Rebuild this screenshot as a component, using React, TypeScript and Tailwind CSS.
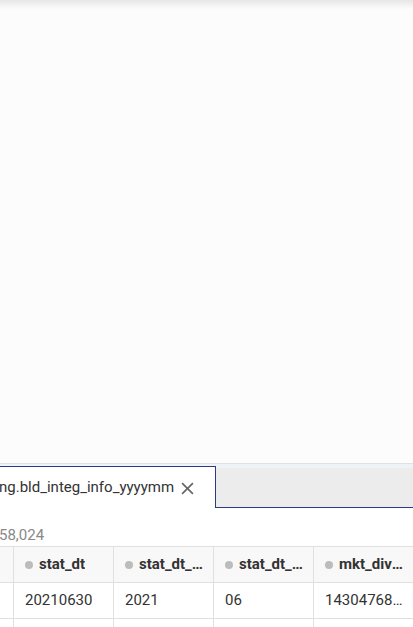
import React from "react";

const cols = [
  { h: "", d: "" },
  { h: "stat_dt", d: "20210630" },
  { h: "stat_dt_year", d: "2021" },
  { h: "stat_dt_month", d: "06" },
  { h: "mkt_div_code", d: "1430476800000" },
];

export default function App() {
  return (
    <div
      className="w-[413px] h-[627px] overflow-hidden bg-white flex flex-col"
      style={{ fontFamily: "Roboto, 'Liberation Sans', sans-serif" }}
    >
      <div className="h-[464px] shrink-0 bg-[#fcfcfc] border-b border-[#e2e2e2] relative">
        <div className="absolute top-0 left-0 right-0 h-[9px] bg-gradient-to-b from-[#e6e6e6] to-[#fcfcfc]" />
      </div>
      <div className="h-[44px] shrink-0 flex">
        <div className="w-[216px] shrink-0 flex flex-col">
          <div className="h-[2px] bg-[#eef3f8]" />
          <div className="flex-1 bg-white border-t-[1.5px] border-r-[1.5px] border-[#2f3a86] flex items-center">
            <span className="text-[15px] text-[#333] whitespace-nowrap ml-[-1px] leading-none">
              ng.bld_integ_info_yyyymm
            </span>
            <svg width="13" height="13" viewBox="0 0 12 12" className="ml-[7px] mt-[1px]">
              <path d="M1 1 L11 11 M11 1 L1 11" stroke="#666" strokeWidth="1.5" />
            </svg>
          </div>
        </div>
        <div className="flex-1 flex flex-col border-b-[1.5px] border-[#2f3a86]">
          <div className="h-[4px] bg-[#eef3f8]" />
          <div className="flex-1 bg-[#ececec]" />
        </div>
      </div>
      <div className="h-[38px] shrink-0 flex items-end pb-[3px]">
        <span className="text-[15px] text-[#888] leading-none ml-[-1px]">58,024</span>
      </div>
      <div className="flex ml-[-86px] border-t border-[#e0e0e0]">
        {cols.map((c, i) => (
          <div key={i} className="w-[100px] shrink-0 border-r border-[#e0e0e0] flex flex-col">
            <div className="h-[36px] bg-[#f8f8f8] border-b border-[#e0e0e0] flex items-center pl-[11px] pr-[8px] min-w-0">
              {c.h && (
                <>
                  <span className="w-[8px] h-[8px] rounded-full bg-[#bcbcbc] shrink-0 mr-[6px]" />
                  <span className="text-[15px] font-bold text-[#333] truncate">{c.h}</span>
                </>
              )}
            </div>
            <div className="h-[36px] bg-white border-b border-[#e0e0e0] flex items-center pl-[11px] pr-[8px] min-w-0">
              <span className="text-[15px] text-[#333] truncate">{c.d}</span>
            </div>
            <div className="h-[20px] bg-white" />
          </div>
        ))}
      </div>
    </div>
  );
}
